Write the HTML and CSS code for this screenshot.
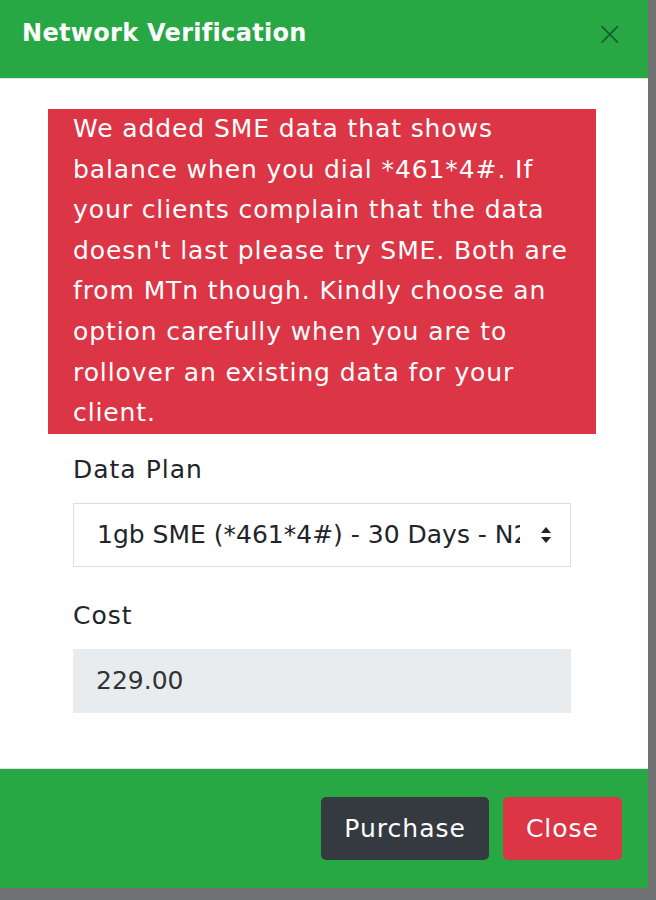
FILE: index.html
```html
<!DOCTYPE html>
<html lang="en">
<head>
    <meta charset="UTF-8">
    <meta name="viewport" content="width=device-width, initial-scale=1.0">
    <title>Network Verification</title>
    <link rel="stylesheet" href="styles.css">
</head>
<body>
    <div class="modal">
        <div class="modal_header">
            <h2 class="modal_title">Network Verification</h2>
            <span class="close_x">&times;</span>
        </div>

        <div class="modal_body">
            <div class="alert">
                We added SME data that shows<br>
                balance when you dial *461*4#. If<br>
                your clients complain that the data<br>
                doesn't last please try SME. Both are<br>
                from MTn though. Kindly choose an<br>
                option carefully when you are to<br>
                rollover an existing data for your<br>
                client.
            </div>

            <div class="form_group">
                <label class="label">Data Plan</label>
                <div class="select">
                    <span class="select_text">1gb SME (*461*4#) - 30 Days - N229.00</span>
                    <svg class="arrows" width="12" height="18" viewBox="0 0 12 18">
                        <path d="M6 1 L11 7 H1 Z" fill="#212529"/>
                        <path d="M6 17 L11 11 H1 Z" fill="#212529"/>
                    </svg>
                </div>
            </div>

            <div class="form_group">
                <label class="label">Cost</label>
                <div class="input_readonly">229.00</div>
            </div>
        </div>

        <div class="modal_footer">
            <button class="btn btn_dark">Purchase</button>
            <button class="btn btn_red">Close</button>
        </div>
    </div>
</body>
</html>
```

FILE: styles.css
```css
body {
    font-family: "DejaVu Sans", Arial, sans-serif;
    margin: 0;
    padding: 0;
    background-color: #6f7173;
    height: 900px;
    overflow: hidden;
}
.modal {
    width: 648px;
    background-color: #fff;
}
.modal_header {
    height: 79px;
    background-color: #28a745;
    border-bottom: 1px solid #d8e8dc;
    display: flex;
    justify-content: space-between;
    align-items: center;
    padding: 0 24px 12px 22px;
    box-sizing: border-box;
}
.modal_title {
    margin: 0;
    color: #fff;
    font-family: "DejaVu Sans", sans-serif;
    font-weight: bold;
    font-size: 24px;
    letter-spacing: 0.3px;
}
.close_x {
    color: #1a5e2b;
    font-size: 34px;
    font-weight: 300;
    line-height: 1;
}
.modal_body {
    padding: 30px 52px 55px 48px;
}
.alert {
    background-color: #dc3545;
    color: #fff;
    font-size: 25px;
    letter-spacing: 0.9px;
    line-height: 40.6px;
    padding: 0 25px;
    white-space: nowrap;
}
.form_group {
    padding: 0 25px;
    margin-top: 16px;
}
.form_group + .form_group {
    margin-top: 29px;
}
.label {
    display: block;
    color: #212529;
    font-size: 25px;
    letter-spacing: 1px;
    line-height: 40px;
    margin-bottom: 13px;
}
.select {
    height: 64px;
    border: 1.5px solid #dcdfe2;
    box-sizing: border-box;
    display: flex;
    align-items: center;
    padding: 0 18px 0 23px;
    gap: 20px;
}
.select_text {
    flex: 1;
    white-space: nowrap;
    overflow: hidden;
    font-size: 25px;
    color: #212529;
}
.input_readonly {
    height: 64px;
    background-color: #e9ecef;
    display: flex;
    align-items: center;
    padding: 0 23px;
    font-size: 25px;
    color: #333;
}
.modal_footer {
    height: 120px;
    background-color: #28a745;
    border-top: 1px solid #dee2e6;
    display: flex;
    justify-content: flex-end;
    align-items: center;
    gap: 14px;
    padding: 0 26px 0 0;
    box-sizing: border-box;
}
.btn {
    height: 63px;
    border: none;
    border-radius: 5px;
    color: #fff;
    font-family: "DejaVu Sans", sans-serif;
    font-size: 25px;
    letter-spacing: 1px;
    padding: 0 23px;
}
.btn_dark {
    background-color: #343a40;
}
.btn_red {
    background-color: #dc3545;
}
```
